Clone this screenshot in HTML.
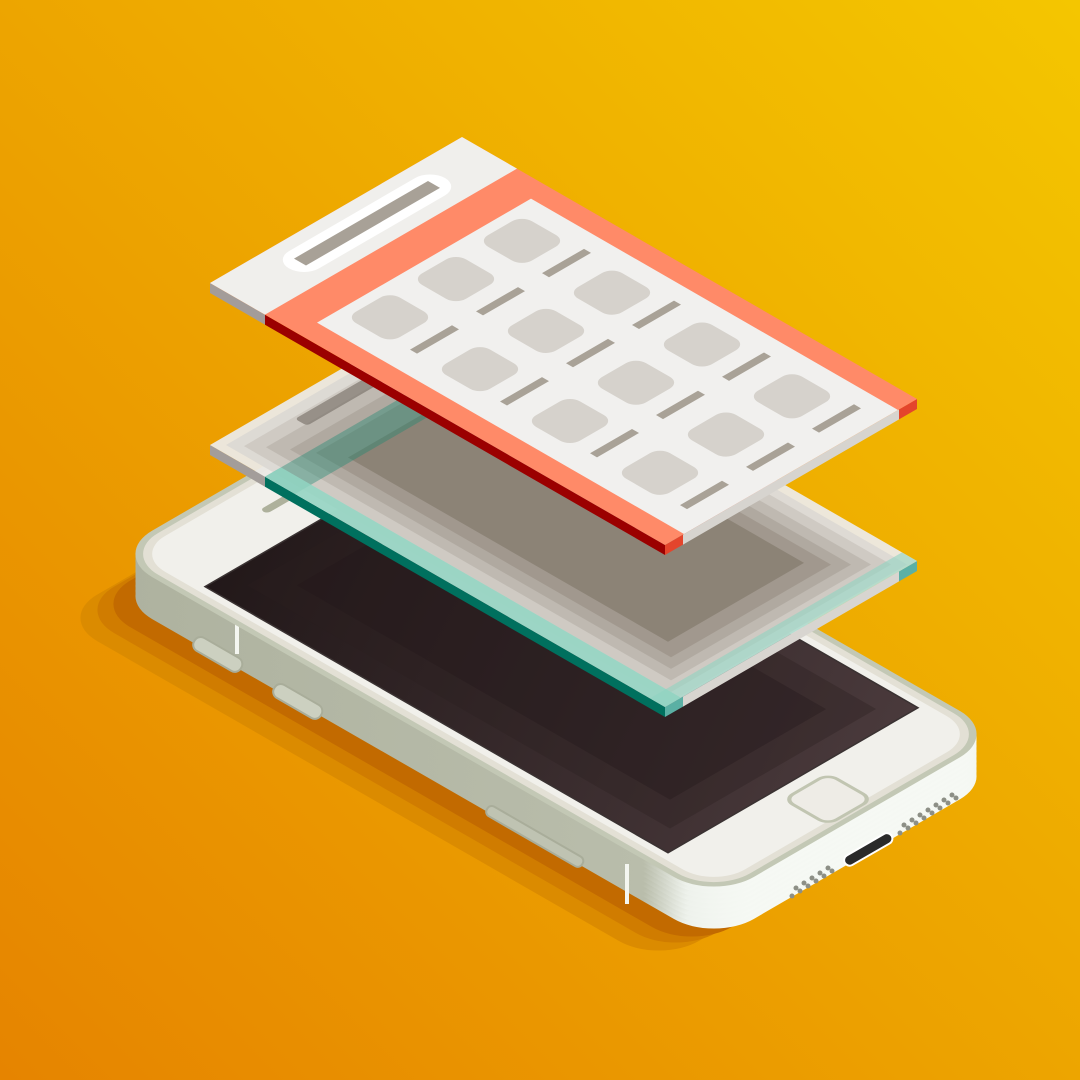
<!DOCTYPE html>
<html><head><meta charset="utf-8"><style>html,body{margin:0;padding:0;width:1080px;height:1080px;overflow:hidden}svg{display:block}</style></head>
<body>
<svg width="1080" height="1080" viewBox="0 0 1080 1080" xmlns="http://www.w3.org/2000/svg">
<defs>
<linearGradient id="bg" x1="1080" y1="0" x2="0" y2="1080" gradientUnits="userSpaceOnUse">
<stop offset="0" stop-color="#f4c600"/><stop offset="1" stop-color="#e68400"/></linearGradient>
<linearGradient id="side" x1="0" y1="0" x2="602" y2="0" gradientUnits="userSpaceOnUse">
<stop offset="0" stop-color="#aeb29f"/><stop offset="0.88" stop-color="#b9bdab"/><stop offset="0.95" stop-color="#eef2ec"/><stop offset="1" stop-color="#f6f9f4"/></linearGradient>
<linearGradient id="scr" x1="75" y1="18" x2="538" y2="268" gradientUnits="userSpaceOnUse">
<stop offset="0" stop-color="#221819"/><stop offset="1" stop-color="#4a3a3c"/></linearGradient>
<rect id="ph" x="0" y="0" width="602" height="286" rx="40" transform="matrix(1,0.5748,1,-0.5804,112,550)"/>
</defs>
<rect width="1080" height="1080" fill="url(#bg)"/>

<g transform="translate(0,4)">
<!-- phone shadow -->
<g transform="translate(-55,64)"><use href="#ph" fill="#db8b00"/></g>
<g transform="translate(-38,56)"><use href="#ph" fill="#d07c00"/></g>
<g transform="translate(-22,50)"><use href="#ph" fill="#c26a00"/></g>

<!-- phone sides -->
<g fill="url(#side)">
<rect x="0" y="0" width="602" height="286" rx="40" transform="translate(0,42) matrix(1,0.5748,1,-0.5804,112,550)"/>
<rect x="0" y="0" width="602" height="286" rx="40" transform="translate(0,37) matrix(1,0.5748,1,-0.5804,112,550)"/>
<rect x="0" y="0" width="602" height="286" rx="40" transform="translate(0,32) matrix(1,0.5748,1,-0.5804,112,550)"/>
<rect x="0" y="0" width="602" height="286" rx="40" transform="translate(0,27) matrix(1,0.5748,1,-0.5804,112,550)"/>
<rect x="0" y="0" width="602" height="286" rx="40" transform="translate(0,22) matrix(1,0.5748,1,-0.5804,112,550)"/>
<rect x="0" y="0" width="602" height="286" rx="40" transform="translate(0,17) matrix(1,0.5748,1,-0.5804,112,550)"/>
<rect x="0" y="0" width="602" height="286" rx="40" transform="translate(0,12) matrix(1,0.5748,1,-0.5804,112,550)"/>
<rect x="0" y="0" width="602" height="286" rx="40" transform="translate(0,7) matrix(1,0.5748,1,-0.5804,112,550)"/>
<rect x="0" y="0" width="602" height="286" rx="40" transform="translate(0,3) matrix(1,0.5748,1,-0.5804,112,550)"/>
</g>
<!-- side buttons -->
<g fill="#ccd0c0" stroke="#a9ad9a" stroke-width="2">
<rect x="-27" y="-7" width="54" height="15" rx="7" transform="translate(218,650) rotate(30)"/>
<rect x="-27" y="-7" width="54" height="15" rx="7" transform="translate(298,697) rotate(30)"/>
<rect x="-55" y="-5" width="110" height="11" rx="5" transform="translate(535,832) rotate(30)" fill="#bfc3b2"/>
</g>
<rect x="235" y="610" width="4" height="40" fill="#f4f6f0"/>
<rect x="625" y="860" width="4" height="40" fill="#f4f6f0"/>
<!-- speaker dots / connector -->
<g fill="#8d8f86">
<circle cx="792" cy="892" r="2.5"/><circle cx="800" cy="887" r="2.5"/><circle cx="808" cy="882" r="2.5"/><circle cx="816" cy="877" r="2.5"/><circle cx="824" cy="872" r="2.5"/><circle cx="832" cy="867" r="2.5"/>
<circle cx="796" cy="884" r="2.5"/><circle cx="804" cy="879" r="2.5"/><circle cx="812" cy="874" r="2.5"/><circle cx="820" cy="869" r="2.5"/><circle cx="828" cy="864" r="2.5"/>
<circle cx="900" cy="829" r="2.5"/><circle cx="908" cy="824" r="2.5"/><circle cx="916" cy="819" r="2.5"/><circle cx="924" cy="814" r="2.5"/><circle cx="932" cy="809" r="2.5"/><circle cx="940" cy="804" r="2.5"/><circle cx="948" cy="799" r="2.5"/><circle cx="956" cy="794" r="2.5"/>
<circle cx="904" cy="821" r="2.5"/><circle cx="912" cy="816" r="2.5"/><circle cx="920" cy="811" r="2.5"/><circle cx="928" cy="806" r="2.5"/><circle cx="936" cy="801" r="2.5"/><circle cx="944" cy="796" r="2.5"/><circle cx="952" cy="791" r="2.5"/>
</g>
<rect x="-27" y="-5" width="54" height="11" rx="5.5" transform="translate(868,845) rotate(-30)" fill="#2a2a2a" stroke="#fff" stroke-width="2"/>

<!-- phone top -->
<g transform="matrix(1,0.5748,1,-0.5804,112,550)">
<rect x="0" y="0" width="602" height="286" rx="40" fill="#c3c8b5"/>
<rect x="5" y="5" width="592" height="276" rx="36" fill="#e3e0d5"/>
<rect x="11" y="11" width="580" height="264" rx="31" fill="#f1f0eb"/>
<rect x="75" y="18" width="463" height="250" fill="url(#scr)" stroke="#3a3232" stroke-width="1.5"/>
<rect x="95" y="40" width="423" height="206" fill="#2a1f20" opacity="0.35"/>
<rect x="120" y="65" width="373" height="156" fill="#221819" opacity="0.35"/>
<rect x="550" y="122" width="44" height="44" rx="9" fill="#eeece6" stroke="#c1c5b1" stroke-width="3"/>
<rect x="36" y="112" width="7" height="60" rx="3.5" fill="#aeb19c"/>
</g>
</g>

<!-- glass layer -->
<g>
<polygon points="210,445 265,476.7 265,486.7 210,455" fill="#a39d9a"/>
<polygon points="265,476.7 665,707 665,717 265,486.7" fill="#00705e"/>
<polygon points="665,707 683,696.6 683,706.6 665,717" fill="#5bb0a4"/>
<polygon points="683,696.6 899,571.4 899,581.4 683,706.6" fill="#d8d5d0"/>
<polygon points="899,571.4 917,561 917,571 899,581.4" fill="#5bb0a4"/>
<g transform="matrix(1,0.5758,1,-0.5794,210,445)">
<rect x="0" y="0" width="455" height="252" fill="#eceae6" opacity="0.95"/>
<rect x="8" y="8" width="445" height="236" fill="#dcd8d3" opacity="0.9"/>
<rect x="18" y="16" width="427" height="220" fill="#cdc8c1" opacity="0.9"/>
<rect x="30" y="26" width="405" height="200" fill="#bdb7af" opacity="0.9"/>
<rect x="44" y="36" width="381" height="180" fill="#aea79e" opacity="0.9"/>
<rect x="60" y="46" width="355" height="160" fill="#9f978c" opacity="0.92"/>
<rect x="80" y="58" width="320" height="136" fill="#8c8376"/>
<rect x="20" y="65" width="12" height="130" rx="3" fill="#7f786f" opacity="0.7"/>
<rect x="55" y="0" width="30" height="252" fill="#1f8a72" opacity="0.4"/>
<rect x="55" y="0" width="400" height="16" fill="#8fd3c1" opacity="0.85"/>
<rect x="440" y="0" width="15" height="252" fill="#8fd3c1" opacity="0.6"/>
</g>
</g>

<!-- top card -->
<g>
<polygon points="210,283 265,314.7 265,324.7 210,293" fill="#a39c99"/>
<polygon points="265,314.7 665,545 665,555 265,324.7" fill="#9b0000"/>
<polygon points="665,545 683,534.6 683,544.6 665,555" fill="#e4452c"/>
<polygon points="683,534.6 899,409.4 899,419.4 683,544.6" fill="#d7d4cf"/>
<polygon points="899,409.4 917,399 917,409 899,419.4" fill="#e4452c"/>
<g transform="matrix(1,0.5758,1,-0.5794,210,283)">
<rect x="0" y="0" width="455" height="252" fill="#ff8a68"/>
<rect x="0" y="0" width="55" height="252" fill="#f0efec"/>
<rect x="12" y="52" width="30" height="156" rx="15" fill="#ffffff"/>
<rect x="21" y="63" width="12" height="134" fill="#a8a197"/>
<rect x="88" y="19" width="367" height="214" fill="#f1f0ee"/>
<g fill="#d6d2cc">
<rect x="98" y="38" width="44" height="44" rx="10"/><rect x="98" y="104" width="44" height="44" rx="10"/><rect x="98" y="170" width="44" height="44" rx="10"/>
<rect x="188" y="38" width="44" height="44" rx="10"/><rect x="188" y="104" width="44" height="44" rx="10"/><rect x="188" y="170" width="44" height="44" rx="10"/>
<rect x="278" y="38" width="44" height="44" rx="10"/><rect x="278" y="104" width="44" height="44" rx="10"/><rect x="278" y="170" width="44" height="44" rx="10"/>
<rect x="368" y="38" width="44" height="44" rx="10"/><rect x="368" y="104" width="44" height="44" rx="10"/><rect x="368" y="170" width="44" height="44" rx="10"/>
</g>
<g fill="#a9a297">
<rect x="158" y="42" width="7" height="42"/><rect x="158" y="108" width="7" height="42"/><rect x="158" y="174" width="7" height="42"/>
<rect x="248" y="42" width="7" height="42"/><rect x="248" y="108" width="7" height="42"/><rect x="248" y="174" width="7" height="42"/>
<rect x="338" y="42" width="7" height="42"/><rect x="338" y="108" width="7" height="42"/><rect x="338" y="174" width="7" height="42"/>
<rect x="428" y="42" width="7" height="42"/><rect x="428" y="108" width="7" height="42"/><rect x="428" y="174" width="7" height="42"/>
</g>
</g>
</g>
</svg>
</body></html>
